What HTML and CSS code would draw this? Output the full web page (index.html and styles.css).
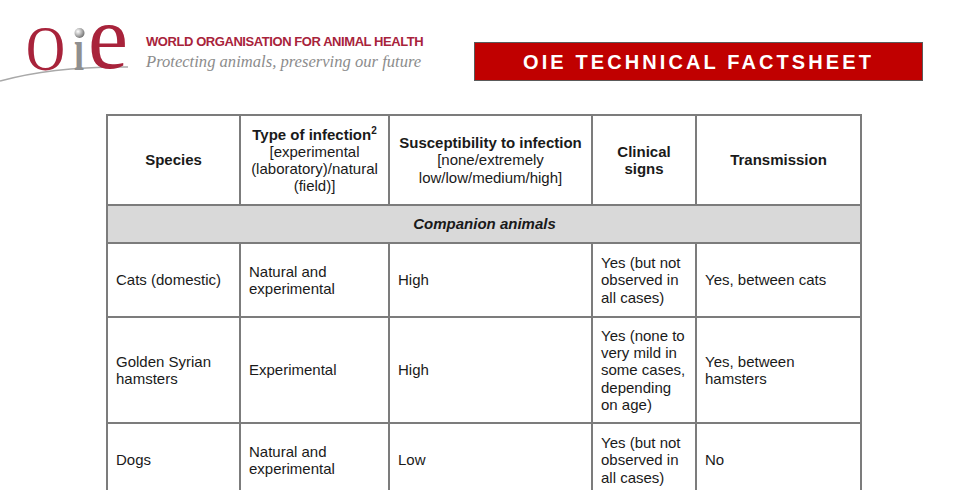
FILE: index.html
```html
<!DOCTYPE html>
<html lang="en">
<head>
<meta charset="utf-8">
<title>OIE Technical Factsheet</title>
<link rel="stylesheet" href="styles.css">
</head>
<body>
<header class="top">
  <div class="brand">
    <svg class="logo" width="140" height="90" viewBox="0 0 140 90" aria-label="OIE logo">
      <defs>
        <radialGradient id="globe" cx="0.35" cy="0.35" r="0.7">
          <stop offset="0" stop-color="#ffffff"/>
          <stop offset="0.5" stop-color="#b8b8b8"/>
          <stop offset="1" stop-color="#6e6e6e"/>
        </radialGradient>
      </defs>
      <path d="M0 81 Q 55 66 128 67" fill="none" stroke="#a9a9a9" stroke-width="1.6"/>
      <text x="26" y="70" font-family="Liberation Serif, serif" font-size="64" fill="#a8233b" textLength="39" lengthAdjust="spacingAndGlyphs">O</text>
      <text x="74" y="70" font-family="Liberation Serif, serif" font-size="62" font-weight="bold" fill="#8f8f8f" textLength="10" lengthAdjust="spacingAndGlyphs">ı</text>
      <circle cx="79.5" cy="33" r="5" fill="url(#globe)"/>
      <text x="88" y="68" font-family="Liberation Serif, serif" font-size="92" fill="#a8233b" textLength="40" lengthAdjust="spacingAndGlyphs">e</text>
    </svg>
    <div class="brand-text">
      <div class="org">WORLD ORGANISATION FOR ANIMAL HEALTH</div>
      <div class="motto">Protecting animals, preserving our future</div>
    </div>
  </div>
  <div class="banner">OIE TECHNICAL FACTSHEET</div>
</header>

<table class="facts">
  <colgroup>
    <col class="c1"><col class="c2"><col class="c3"><col class="c4"><col class="c5">
  </colgroup>
  <thead>
    <tr class="head">
      <th><b>Species</b></th>
      <th><b>Type of infection<sup>2</sup></b><br>[experimental (laboratory)/natural (field)]</th>
      <th><b>Susceptibility to infection</b><br>[none/extremely low/low/medium/high]</th>
      <th><b>Clinical signs</b></th>
      <th><b>Transmission</b></th>
    </tr>
  </thead>
  <tbody>
    <tr class="group"><td colspan="5">Companion animals</td></tr>
    <tr class="r-cats">
      <td>Cats (domestic)</td>
      <td>Natural and experimental</td>
      <td>High</td>
      <td>Yes (but not observed in all cases)</td>
      <td>Yes, between cats</td>
    </tr>
    <tr class="r-ham">
      <td>Golden Syrian hamsters</td>
      <td>Experimental</td>
      <td>High</td>
      <td>Yes (none to very mild in some cases, depending on age)</td>
      <td>Yes, between hamsters</td>
    </tr>
    <tr class="r-dogs">
      <td>Dogs</td>
      <td>Natural and experimental</td>
      <td>Low</td>
      <td>Yes (but not observed in all cases)</td>
      <td>No</td>
    </tr>
  </tbody>
</table>
</body>
</html>
```

FILE: styles.css
```css
html, body {
  margin: 0;
  padding: 0;
  background: #ffffff;
}
body {
  font-family: "Liberation Sans", Arial, sans-serif;
  color: #1a1a1a;
  width: 977px;
  height: 490px;
  overflow: hidden;
}
.top {
  display: flex;
  height: 114px;
}
.brand {
  width: 474px;
  display: flex;
}
.logo {
  display: block;
  flex: none;
  width: 140px;
  height: 90px;
}
.brand-text {
  padding-top: 34px;
  margin-left: 6px;
}
.org {
  font-size: 13px;
  font-weight: bold;
  letter-spacing: -0.43px;
  color: #a8233b;
  line-height: 16px;
  white-space: nowrap;
}
.motto {
  font-family: "Liberation Serif", "Times New Roman", serif;
  font-style: italic;
  font-size: 16.6px;
  color: #8c8c8c;
  line-height: 18px;
  margin-top: 3px;
  white-space: nowrap;
}
.banner {
  margin-top: 42px;
  width: 447px;
  height: 36px;
  background: #c00000;
  border: 1px solid #5a5a5a;
  color: #ffffff;
  font-weight: bold;
  font-size: 20px;
  letter-spacing: 3.1px;
  display: flex;
  align-items: center;
  justify-content: center;
  padding-top: 1px;
}
.facts {
  margin-left: 106px;
  border-collapse: collapse;
  table-layout: fixed;
  width: 754px;
  font-size: 15px;
  line-height: 17.2px;
}
.c1 { width: 133px; }
.c2 { width: 149px; }
.c3 { width: 203px; }
.c4 { width: 104px; }
.c5 { width: 165px; }
.facts th,
.facts td {
  border: 2px solid #7c7c7c;
  padding: 0 7px 0 8px;
  vertical-align: middle;
}
.facts th {
  font-weight: normal;
  text-align: center;
  padding: 0 6px;
}
.facts th b { font-weight: bold; }
.facts sup {
  font-size: 10px;
  font-weight: bold;
  line-height: 0;
  vertical-align: 6px;
}
.head th { height: 88px; }
.group td {
  height: 36px;
  background: #d9d9d9;
  text-align: center;
  font-weight: bold;
  font-style: italic;
}
.r-cats td { height: 72px; }
.r-ham td { height: 104px; }
.r-dogs td { height: 72px; }
```
